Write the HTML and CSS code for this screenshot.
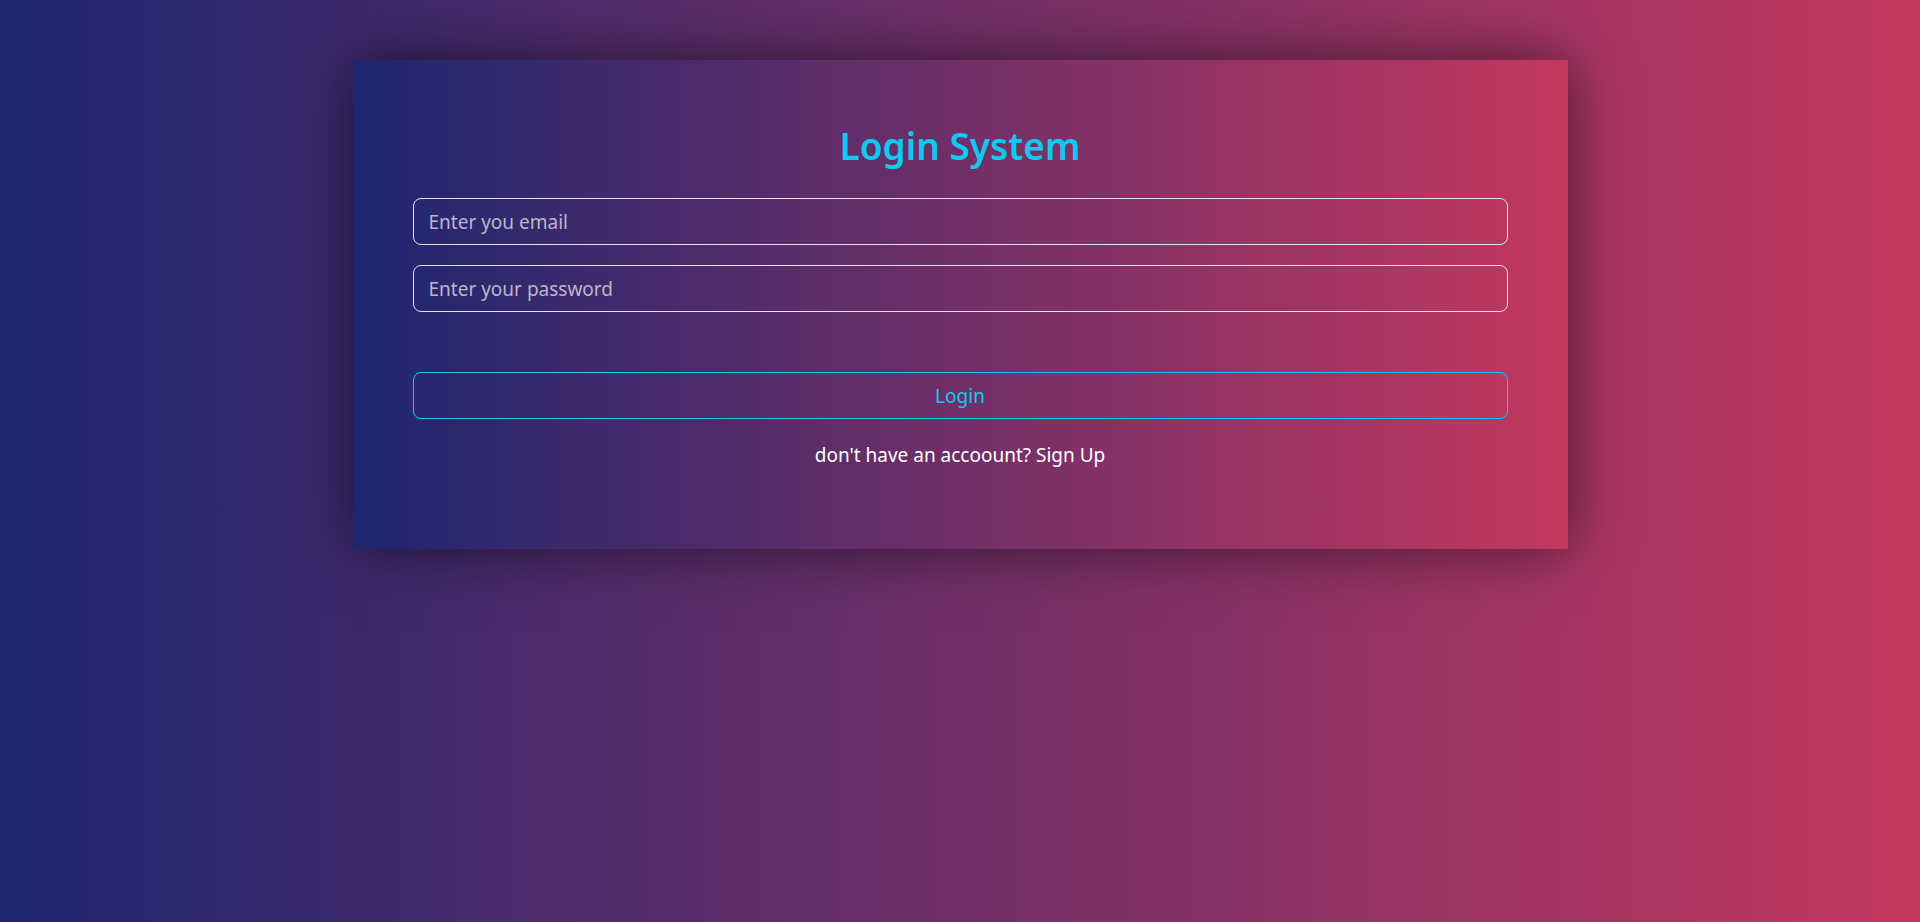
FILE: index.html
```html
<!DOCTYPE html>
<html lang="en">
<head>
<meta charset="utf-8">
<title>Login System</title>
<link rel="stylesheet" href="styles.css">
</head>
<body>
<main class="page">
  <form class="card" onsubmit="return false;">
    <h1 class="title">Login System</h1>
    <input class="field" type="email" placeholder="Enter you email">
    <input class="field" type="password" placeholder="Enter your password">
    <button class="btn" type="submit">Login</button>
    <p class="signup">don't have an accoount? Sign Up</p>
  </form>
</main>
</body>
</html>
```
FILE: styles.css
```css
* { box-sizing: border-box; }
html, body {
  margin: 0;
  height: 100%;
}
body {
  background: linear-gradient(to right, #1d2670, #c4385f);
  font-family: "Noto Sans", "Open Sans", sans-serif;
  color: #fff;
}
.page {
  display: flex;
  justify-content: center;
  padding-top: 60px;
}
.card {
  width: 1215px;
  height: 489px;
  padding: 58px 60px 0;
  background: linear-gradient(to right, #1d2670, #c4385f);
  box-shadow: 0 0 55px rgba(0, 0, 0, 0.55);
  display: flex;
  flex-direction: column;
}
.title {
  margin: 0 0 24px;
  text-align: center;
  color: #0dcaf0;
  font-size: 37px;
  font-weight: 600;
  line-height: 56px;
}
.field {
  height: 47px;
  padding: 0 15px;
  border: 1px solid #e6e0ea;
  border-radius: 8px;
  background: transparent;
  color: #fff;
  font-family: inherit;
  font-size: 19px;
  margin-bottom: 20px;
  outline: none;
}
.field::placeholder {
  color: #bdb6c6;
}
.btn {
  margin-top: 40px;
  height: 47px;
  border: 1px solid #0dcaf0;
  border-radius: 8px;
  background: transparent;
  color: #0dcaf0;
  font-family: inherit;
  font-size: 19px;
  cursor: pointer;
}
.signup {
  margin: 22px 0 0;
  text-align: center;
  font-size: 19px;
  line-height: 28px;
  color: #fff;
}
```
